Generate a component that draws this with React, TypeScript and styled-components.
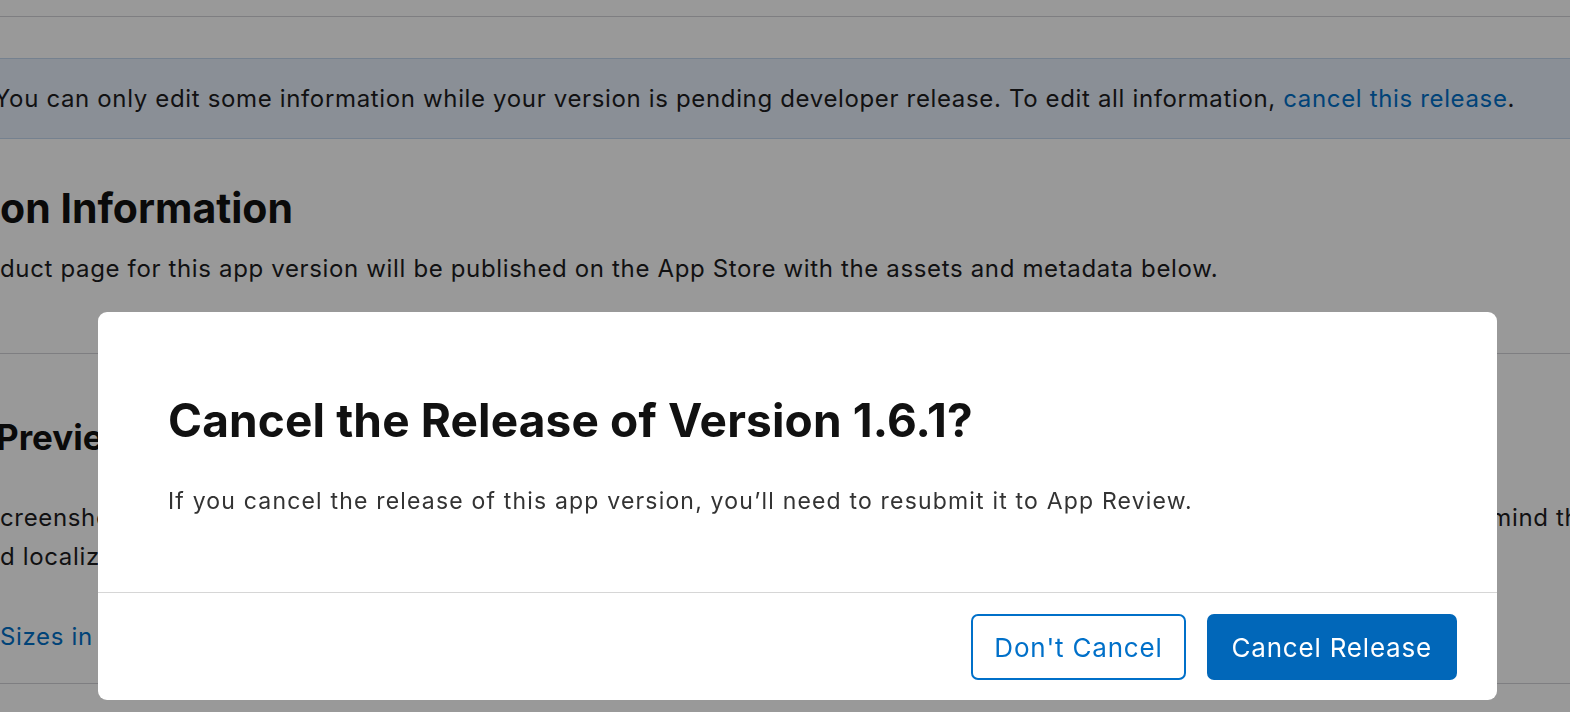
import React from 'react'
import styled, { createGlobalStyle } from 'styled-components'

const GlobalStyle = createGlobalStyle`
  html, body {
    margin: 0;
    padding: 0;
    overflow: hidden;
    background: #ffffff;
  }
  * {
    box-sizing: border-box;
  }
  body {
    font-family: Inter, "Noto Sans", "Liberation Sans", sans-serif;
    color: #1d1d1f;
  }
`

const App = () => {
  return (
    <>
      <GlobalStyle />
      <PageWrapper>
        <TopBar />
        <Notice>
          You can only edit some information while your version is pending developer release. To edit all
          information,{' '}
          <Link>cancel this release</Link>.
        </Notice>
        <Section>
          <SectionTitle size={41}>on Information</SectionTitle>
          <SectionText>
            duct page for this app version will be published on the App Store with the assets and metadata below.
          </SectionText>
        </Section>
        <Section bordered>
          <SectionTitle size={35} indent={-4}>
            Preview
          </SectionTitle>
          <TextRow>
            <SectionText>creenshots</SectionText>
            <SectionText>mind the</SectionText>
          </TextRow>
          <SectionText>d localizations</SectionText>
          <LinkRow>
            <Link>Sizes in</Link>
          </LinkRow>
        </Section>
        <BottomRule />
      </PageWrapper>

      <Overlay>
        <Dialog role="dialog">
          <DialogBody>
            <DialogTitle>Cancel the Release of Version 1.6.1?</DialogTitle>
            <DialogText>
              If you cancel the release of this app version, you’ll need to resubmit it to App Review.
            </DialogText>
          </DialogBody>
          <DialogFooter>
            <Button>Don't Cancel</Button>
            <Button primary>Cancel Release</Button>
          </DialogFooter>
        </Dialog>
      </Overlay>
    </>
  )
}

export default App

const PageWrapper = styled.div`
  width: 1570px;
  height: 712px;
  overflow: hidden;
  background: #ffffff;
`

const TopBar = styled.div`
  height: 17px;
  border-bottom: 1px solid #d2d2d7;
`

const Notice = styled.div`
  margin-top: 41px;
  height: 81px;
  display: flex;
  align-items: center;
  margin-left: -6px;
  white-space: pre;
  font-size: 24px;
  letter-spacing: 0.65px;
  background: #e6eefa;
  border-top: 1px solid #c3d7ee;
  border-bottom: 1px solid #c3d7ee;
`

const Link = styled.span`
  color: #0070c9;
`

const Section = styled.section<{ bordered?: boolean }>`
  display: flex;
  flex-direction: column;
  border-top: ${p => (p.bordered ? '1px solid #d2d2d7' : 'none')};
  padding-top: ${p => (p.bordered ? '58px' : '44px')};
  padding-bottom: ${p => (p.bordered ? '0' : '65px')};
`

const SectionTitle = styled.h2<{ size: number; indent?: number }>`
  margin: 0 0 0 ${p => p.indent || 0}px;
  font-size: ${p => p.size}px;
  font-weight: 700;
  line-height: 50px;
  color: #111111;
  white-space: nowrap;
`

const SectionText = styled.p`
  margin: 16px 0 0;
  font-size: 24px;
  letter-spacing: 0.65px;
  line-height: 39px;
  white-space: nowrap;
`

const TextRow = styled.div`
  display: flex;
  justify-content: space-between;
  margin-top: 36px;
  & + p {
    margin-top: 0;
  }
  p {
    margin: 0;
  }
  p + p {
    margin-right: -24px;
  }
`

const LinkRow = styled.div`
  margin-top: 41px;
  font-size: 24px;
  letter-spacing: 0.65px;
  line-height: 40px;
`

const BottomRule = styled.div`
  margin-top: 26px;
  border-top: 1px solid #d2d2d7;
`

const Overlay = styled.div`
  position: fixed;
  inset: 0;
  background: rgba(0, 0, 0, 0.4);
  padding: 312px 0 0 98px;
`

const Dialog = styled.div`
  width: 1399px;
  height: 388px;
  background: #ffffff;
  border-radius: 9px;
  display: flex;
  flex-direction: column;
  overflow: hidden;
`

const DialogBody = styled.div`
  padding: 81px 70px 0;
  height: 281px;
  border-bottom: 1px solid #d6d6d6;
`

const DialogTitle = styled.h1`
  margin: 0;
  font-size: 46px;
  font-weight: 700;
  line-height: 54px;
  letter-spacing: 0.15px;
  color: #111111;
`

const DialogText = styled.p`
  margin: 39px 0 0;
  font-size: 23px;
  line-height: 30px;
  letter-spacing: 1.18px;
  color: #333333;
`

const DialogFooter = styled.div`
  display: flex;
  justify-content: flex-end;
  gap: 21px;
  padding: 21px 40px 0;
`

const Button = styled.button<{ primary?: boolean }>`
  height: 66px;
  padding: 0 ${p => (p.primary ? '23px' : '21px')};
  border-radius: 7px;
  font-family: Inter, "Noto Sans", "Liberation Sans", sans-serif;
  font-size: 26px;
  font-weight: 400;
  letter-spacing: 0.8px;
  border: 2px solid ${p => (p.primary ? '#0167b9' : '#0070c9')};
  background: ${p => (p.primary ? '#0167b9' : '#ffffff')};
  color: ${p => (p.primary ? '#ffffff' : '#0070c9')};
  cursor: pointer;
`
